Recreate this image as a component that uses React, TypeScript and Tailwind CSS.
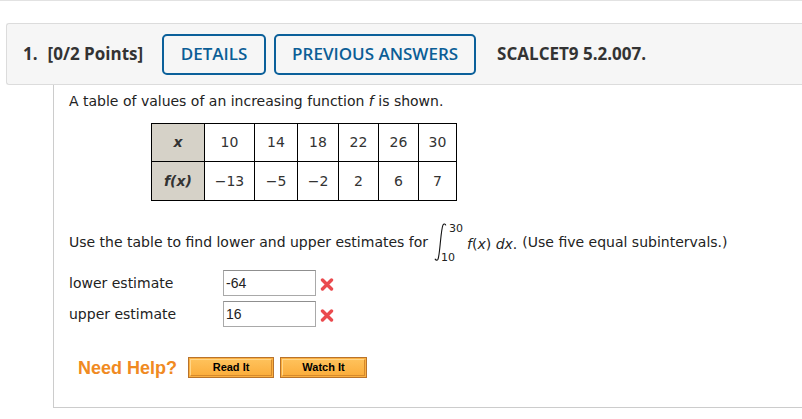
import React from 'react';

const verdana = { fontFamily: '"DejaVu Sans", Verdana, sans-serif' };

const xs = ['10', '14', '18', '22', '26', '30'];
const fx = ['\u221213', '\u22125', '\u22122', '2', '6', '7'];
const colW = ['w-[50px]', 'w-[43px]', 'w-[41px]', 'w-[40px]', 'w-[40px]', 'w-[38px]'];

function RedX() {
  return (
    <svg width="14" height="13" viewBox="0 0 14 13" className="shrink-0">
      <path d="M2.5 2 L11.5 11 M11.5 2 L2.5 11" stroke="#ea4a4e" strokeWidth="3.4" strokeLinecap="round" />
    </svg>
  );
}

function HelpButton({ label, width }: { label: string; width: string }) {
  return (
    <button
      className={`${width} h-[21px] border border-[#b8732c] bg-[#fbb040] p-0 flex items-stretch`}
    >
      <span className="flex-1 m-px border border-[#d68a2c] border-t-[#ffd68a] border-l-[#ffd68a] bg-gradient-to-b from-[#fec15a] to-[#fbae3c] flex items-center justify-center text-[11px] font-bold text-black leading-none font-['Liberation_Sans',Arial,sans-serif]">
        {label}
      </span>
    </button>
  );
}

export default function App() {
  return (
    <div className="w-[802px] h-[419px] bg-white overflow-hidden">
      <div className="h-px bg-[#e2e2e2]" />
      <div className="mt-[22px] ml-[6px] h-[62px] border border-r-0 border-[#dcdcdc] rounded-l-[3px] bg-[#f6f6f6] flex items-center pl-[16px] text-[#333] font-['Open_Sans',sans-serif]">
        <span className="text-[17px] font-bold">1.</span>
        <span className="text-[17px] font-bold ml-[10px]">[0/2 Points]</span>
        <button className="ml-[19px] w-[104px] h-[41px] border-2 border-[#0b609a] rounded-[5px] text-[#0b5e96] text-[17px] font-semibold bg-[#f6f6f6]">
          DETAILS
        </button>
        <button className="ml-[8px] w-[202px] h-[41px] border-2 border-[#0b609a] rounded-[5px] text-[#0b5e96] text-[17px] font-semibold bg-[#f6f6f6]">
          PREVIOUS ANSWERS
        </button>
        <span className="ml-[21px] text-[17px] font-bold">SCALCET9 5.2.007.</span>
      </div>

      <div className="ml-[53px] h-[323px] border-l border-b border-[#cccccc] pl-[15px] pt-[6px] text-[14px] text-[#222]" style={verdana}>
        <p className="leading-[20px]">
          A table of values of an increasing function <i>f</i> is shown.
        </p>

        <table className="mt-[12px] ml-[82px] border-collapse table-fixed w-[306px] text-[#333]">
          <tbody>
            <tr className="h-[38px]">
              <td className="w-[53px] border border-black bg-[#d6d2c8] text-center font-bold italic">x</td>
              {xs.map((v, i) => (
                <td key={v} className={`${colW[i]} border border-black text-center`}>{v}</td>
              ))}
            </tr>
            <tr className="h-[39px]">
              <td className="border border-black bg-[#d6d2c8] text-center font-bold italic">f(x)</td>
              {fx.map((v, i) => (
                <td key={i} className="border border-black text-center">{v}</td>
              ))}
            </tr>
          </tbody>
        </table>

        <div className="mt-[21px] flex items-center h-[40px]">
          <span className="leading-[20px]">Use the table to find lower and upper estimates for</span>
          <span className="relative w-[34px] h-[40px] ml-[5px] shrink-0">
            <svg width="14" height="40" viewBox="0 0 14 40" className="absolute left-0 top-0">
              <path
                d="M12.8 3.4 C12.3 1.8 10.8 1.6 10 3 C9 5 8.2 12 7.4 20 C6.6 28 6 35 5 37.2 C4.2 38.6 2.6 38.4 2 36.8"
                stroke="#111"
                strokeWidth="1.1"
                fill="none"
              />
            </svg>
            <span className="absolute left-[16px] top-[1px] text-[11px] leading-none text-[#222]">30</span>
            <span className="absolute left-[8px] top-[30px] text-[11px] leading-none text-[#222]">10</span>
          </span>
          <span className="leading-[20px] mt-[3px]">
            <i>f</i>(<i>x</i>) <i>dx</i>.
          </span>
          <span className="leading-[20px] ml-[5px]">(Use five equal subintervals.)</span>
        </div>

        <div className="mt-[8px] flex flex-col gap-[5px]">
          <div className="flex items-center h-[26px]">
            <span className="w-[154px]">lower estimate</span>
            <div className="w-[93px] h-[26px] border border-[#a9a9a9] border-t-[#8f8f8f] flex items-center pl-[2px] text-[14px] text-[#222] font-['Liberation_Sans',Arial,sans-serif]">
              -64
            </div>
            <span className="ml-[4px] mt-[2px]"><RedX /></span>
          </div>
          <div className="flex items-center h-[26px]">
            <span className="w-[154px]">upper estimate</span>
            <div className="w-[93px] h-[26px] border border-[#a9a9a9] border-t-[#8f8f8f] flex items-center pl-[2px] text-[14px] text-[#222] font-['Liberation_Sans',Arial,sans-serif]">
              16
            </div>
            <span className="ml-[4px] mt-[2px]"><RedX /></span>
          </div>
        </div>

        <div className="mt-[30px] ml-[9px] flex items-center">
          <span className="text-[18px] font-bold text-[#f08a22] font-['Liberation_Sans',Arial,sans-serif] leading-none">Need Help?</span>
          <span className="ml-[11px]"><HelpButton label="Read It" width="w-[86px]" /></span>
          <span className="ml-[6px]"><HelpButton label="Watch It" width="w-[87px]" /></span>
        </div>
      </div>
    </div>
  );
}
